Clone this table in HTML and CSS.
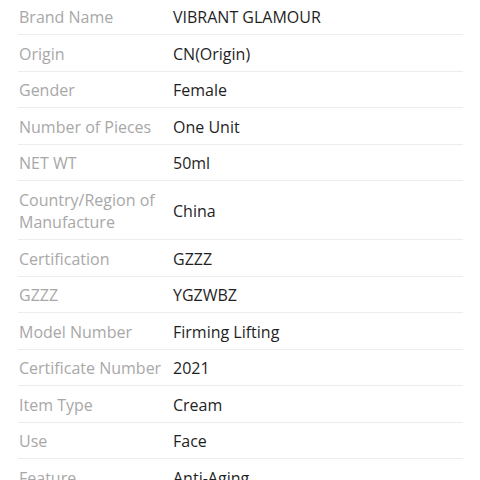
FILE: index.html
```html
<!DOCTYPE html>
<html>
<head>
<meta charset="utf-8">
<link rel="stylesheet" href="styles.css">
</head>
<body>
<div class="specs">
  <div class="row"><div class="label">Brand Name</div><div class="value">VIBRANT GLAMOUR</div></div>
  <div class="row"><div class="label">Origin</div><div class="value">CN(Origin)</div></div>
  <div class="row"><div class="label">Gender</div><div class="value">Female</div></div>
  <div class="row"><div class="label">Number of Pieces</div><div class="value">One Unit</div></div>
  <div class="row"><div class="label">NET WT</div><div class="value">50ml</div></div>
  <div class="row"><div class="label">Country/Region of Manufacture</div><div class="value">China</div></div>
  <div class="row"><div class="label">Certification</div><div class="value">GZZZ</div></div>
  <div class="row"><div class="label">GZZZ</div><div class="value">YGZWBZ</div></div>
  <div class="row"><div class="label">Model Number</div><div class="value">Firming Lifting</div></div>
  <div class="row"><div class="label">Certificate Number</div><div class="value">2021</div></div>
  <div class="row"><div class="label">Item Type</div><div class="value">Cream</div></div>
  <div class="row"><div class="label">Use</div><div class="value">Face</div></div>
  <div class="row"><div class="label">Feature</div><div class="value">Anti-Aging</div></div>
</div>
</body>
</html>
```
FILE: styles.css
```css
html, body {
  margin: 0;
  padding: 0;
  background: #fff;
  overflow: hidden;
}
.specs {
  margin: -1.5px 17px 0 18px;
  font-family: "Open Sans", sans-serif;
  font-size: 16px;
  line-height: 22.5px;
}
.row {
  display: grid;
  grid-template-columns: 155px 1fr;
  align-items: center;
  padding: 7.5px 0 5.5px;
  border-bottom: 1px solid #ececec;
}
.label {
  color: #a8a8a8;
  padding-left: 1px;
  padding-right: 8px;
}
.value {
  color: #1f1f1f;
}
```
